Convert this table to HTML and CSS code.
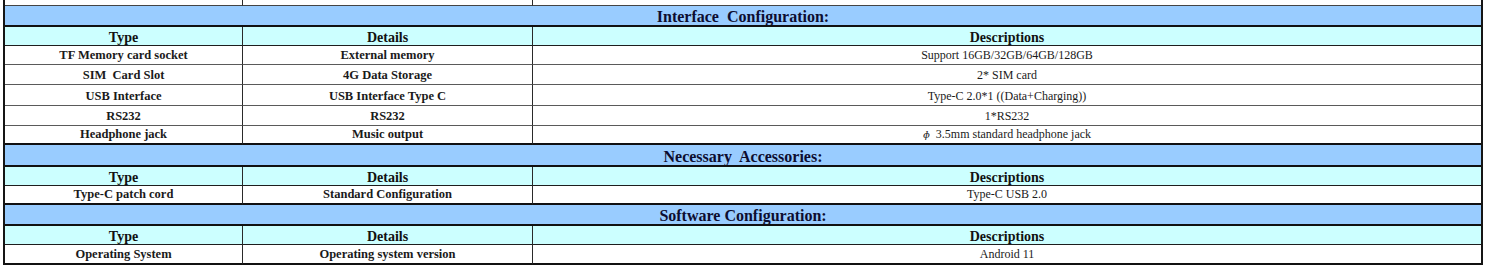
FILE: index.html
```html
<!DOCTYPE html>
<html>
<head>
<meta charset="utf-8">
<link rel="stylesheet" href="styles.css">
</head>
<body>
<div class="spec">
  <div class="cell stub"></div><div class="cell stub"></div><div class="cell stub end"></div>

  <div class="cell section">Interface&nbsp; Configuration:</div>
  <div class="cell head">Type</div><div class="cell head">Details</div><div class="cell head end">Descriptions</div>
  <div class="cell data">TF Memory card socket</div><div class="cell data">External memory</div><div class="cell data desc end">Support 16GB/32GB/64GB/128GB</div>
  <div class="cell data">SIM&nbsp; Card Slot</div><div class="cell data">4G Data Storage</div><div class="cell data desc end">2* SIM card</div>
  <div class="cell data">USB Interface</div><div class="cell data">USB Interface Type C</div><div class="cell data desc end">Type-C 2.0*1 ((Data+Charging))</div>
  <div class="cell data">RS232</div><div class="cell data">RS232</div><div class="cell data desc end">1*RS232</div>
  <div class="cell data last">Headphone jack</div><div class="cell data last">Music output</div><div class="cell data desc last end"><span class="phi">ɸ</span>&nbsp; 3.5mm standard headphone jack</div>

  <div class="cell section">Necessary&nbsp; Accessories:</div>
  <div class="cell head">Type</div><div class="cell head">Details</div><div class="cell head end">Descriptions</div>
  <div class="cell data last">Type-C patch cord</div><div class="cell data last">Standard Configuration</div><div class="cell data desc last end">Type-C USB 2.0</div>

  <div class="cell section">Software Configuration:</div>
  <div class="cell head">Type</div><div class="cell head">Details</div><div class="cell head end">Descriptions</div>
  <div class="cell data last">Operating System</div><div class="cell data last">Operating system version</div><div class="cell data desc last end">Android 11</div>
</div>
</body>
</html>
```
FILE: styles.css
```css
html, body {
  margin: 0;
  padding: 0;
  background: #ffffff;
}

.spec {
  margin-left: 3px;
  width: 1480px;
  box-sizing: border-box;
  display: grid;
  grid-template-columns: 238px 290px 1fr;
  grid-template-rows: 6px 21px 19px 19px 20px 21px 20px 19px 22px 19px 19px 21px 19px 20px;
  border-left: 2px solid #151515;
  border-right: 2px solid #151515;
  font-family: "Liberation Serif", "Times New Roman", serif;
  color: #111;
}

.cell {
  box-sizing: border-box;
  display: flex;
  align-items: flex-end;
  justify-content: center;
  white-space: nowrap;
  overflow: hidden;
  border-right: 1px solid #2a2a2a;
}

.cell.end {
  border-right: 0;
}

.stub {
  border-bottom: 1px solid #444;
}

.section {
  grid-column: 1 / -1;
  border-right: 0;
  background: #99ccff;
  font-size: 16px;
  font-weight: bold;
  line-height: 16px;
  color: #0d0d30;
  border-bottom: 2px solid #111;
}

.head {
  background: #ccffff;
  font-size: 14px;
  font-weight: bold;
  line-height: 14px;
  border-bottom: 1px solid #1e1e1e;
}

.data {
  font-size: 12.5px;
  font-weight: bold;
  line-height: 15px;
  padding-bottom: 1px;
  color: #1a1a1a;
  border-bottom: 1px solid #5a5a5a;
}

.data.desc {
  font-size: 12px;
  font-weight: normal;
}

.data.last {
  border-bottom: 2px solid #111;
}

.phi {
  font-family: "DejaVu Serif", serif;
  font-size: 10px;
  font-style: italic;
}
```
